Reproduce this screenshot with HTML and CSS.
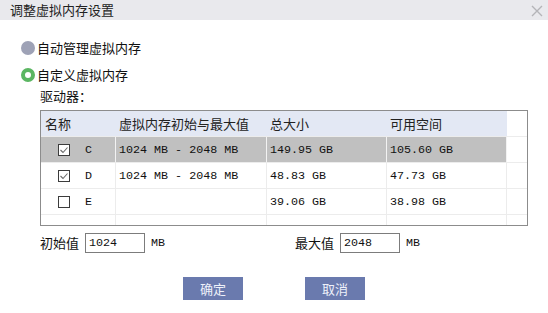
FILE: index.html
```html
<!DOCTYPE html>
<html lang="zh-CN">
<head>
<meta charset="utf-8">
<title>调整虚拟内存设置</title>
<link rel="stylesheet" href="styles.css">
</head>
<body>
<div class="dialog">
  <div class="titlebar">
    <span class="title">调整虚拟内存设置</span>
    <svg class="close" width="12" height="12" viewBox="0 0 12 12"><path d="M1 1L11 11M11 1L1 11" stroke="#b4b4b8" stroke-width="1.4" fill="none"/></svg>
  </div>
  <div class="content">
    <div class="radio-row"><span class="radio radio-off"></span><span class="radio-label">自动管理虚拟内存</span></div>
    <div class="radio-row"><span class="radio radio-on"></span><span class="radio-label">自定义虚拟内存</span></div>
    <div class="drive-label">驱动器：</div>
    <div class="table">
      <div class="trow thead">
        <div class="cell hcell">名称</div>
        <div class="cell hcell">虚拟内存初始与最大值</div>
        <div class="cell hcell">总大小</div>
        <div class="cell hcell">可用空间</div>
        <div class="cell filler"></div>
      </div>
      <div class="trow selected">
        <div class="cell name"><span class="check"><svg width="10" height="10" viewBox="0 0 10 10"><path d="M1.5 5L4 7.5L8.5 2.5" stroke="#6a6a6a" stroke-width="1.1" fill="none"/></svg></span><span class="mono">C</span></div>
        <div class="cell mono">1024 MB - 2048 MB</div>
        <div class="cell mono">149.95 GB</div>
        <div class="cell mono">105.60 GB</div>
        <div class="cell filler"></div>
      </div>
      <div class="trow">
        <div class="cell name"><span class="check"><svg width="10" height="10" viewBox="0 0 10 10"><path d="M1.5 5L4 7.5L8.5 2.5" stroke="#6a6a6a" stroke-width="1.1" fill="none"/></svg></span><span class="mono">D</span></div>
        <div class="cell mono">1024 MB - 2048 MB</div>
        <div class="cell mono">48.83 GB</div>
        <div class="cell mono">47.73 GB</div>
        <div class="cell filler"></div>
      </div>
      <div class="trow">
        <div class="cell name"><span class="check"></span><span class="mono">E</span></div>
        <div class="cell mono"></div>
        <div class="cell mono">39.06 GB</div>
        <div class="cell mono">38.98 GB</div>
        <div class="cell filler"></div>
      </div>
      <div class="trow last">
        <div class="cell"></div>
        <div class="cell"></div>
        <div class="cell"></div>
        <div class="cell"></div>
        <div class="cell filler"></div>
      </div>
    </div>
    <div class="size-row">
      <div class="size-group first">
        <span class="size-label">初始值</span>
        <span class="input mono">1024</span>
        <span class="unit mono">MB</span>
      </div>
      <div class="size-group">
        <span class="size-label">最大值</span>
        <span class="input mono">2048</span>
        <span class="unit mono">MB</span>
      </div>
    </div>
    <div class="buttons">
      <button class="btn">确定</button>
      <button class="btn">取消</button>
    </div>
  </div>
</div>
</body>
</html>
```

FILE: styles.css
```css
* { box-sizing: border-box; }
html, body {
  margin: 0;
  padding: 0;
  background: #ffffff;
}
body {
  width: 548px;
  height: 313px;
  overflow: hidden;
  font-family: "Noto Sans CJK SC", "Noto Sans", sans-serif;
  font-size: 13px;
  color: #111;
}
.dialog {
  width: 548px;
  height: 313px;
  background: #fff;
}
.titlebar {
  height: 20px;
  background: #e9e9ed;
  display: flex;
  align-items: center;
  justify-content: space-between;
  padding: 0 5px 0 10px;
  line-height: 20px;
}
.title {
  color: #222;
  font-size: 13px;
}
.close {
  display: block;
  margin-top: 1px;
}
.content {
  padding-top: 14px;
}
.radio-row {
  height: 27px;
  display: flex;
  align-items: center;
  padding-left: 21px;
  line-height: 16px;
}
.radio {
  width: 14px;
  height: 14px;
  border-radius: 50%;
  flex: none;
}
.radio-off {
  background: #9ea2b6;
}
.radio-on {
  background: #fff;
  border: 4px solid #5bb662;
}
.radio-label {
  margin-left: 2px;
}
.drive-label {
  height: 16px;
  line-height: 16px;
  padding-left: 40px;
}
.table {
  margin: 6px 0 0 40px;
  width: 488px;
  height: 116px;
  border: 1px solid #8c8c8c;
  overflow: hidden;
}
.trow {
  display: grid;
  grid-template-columns: 75px 151px 120px 120px 1fr;
  height: 26px;
  border-bottom: 1px solid #ececec;
}
.trow.last {
  border-bottom: none;
}
.cell {
  border-right: 1px solid #ececec;
  padding-left: 3px;
  display: flex;
  align-items: center;
  white-space: nowrap;
  line-height: 16px;
}
.cell.filler {
  border-right: none;
}
.hcell {
  background: #e3e8f4;
  border-right-color: #e3e8f4;
  color: #222;
}
.thead .cell:first-child {
  padding-left: 4px;
}
.selected .cell {
  background: #c0c0c0;
  border-right-color: #f2f2f2;
}
.selected .cell.filler {
  background: #fff;
}
.mono {
  font-family: "Liberation Mono", "DejaVu Sans Mono", monospace;
  font-size: 11.7px;
  color: #111;
}
.cell.name {
  padding-left: 17px;
}
.check {
  width: 12px;
  height: 12px;
  border: 1px solid #3c3c3c;
  background: #fff;
  display: flex;
  align-items: center;
  justify-content: center;
  margin-right: 15px;
  flex: none;
}
.check svg {
  display: block;
}
.size-row {
  display: flex;
  align-items: center;
  height: 20px;
  margin-top: 7px;
  padding-left: 40px;
}
.size-group {
  display: flex;
  align-items: center;
}
.size-group.first {
  width: 255px;
}
.size-label {
  line-height: 16px;
}
.input {
  width: 60px;
  height: 20px;
  border: 1px solid #7c7c7c;
  margin-left: 6px;
  padding-left: 3px;
  display: flex;
  align-items: center;
}
.unit {
  margin-left: 6px;
}
.buttons {
  display: flex;
  margin-top: 24px;
  padding-left: 183px;
  gap: 62px;
}
.btn {
  width: 60px;
  height: 23px;
  border: none;
  padding: 0;
  background: #6a7aae;
  color: #eef1fa;
  font-family: "Noto Sans CJK SC", "Noto Sans", sans-serif;
  font-size: 13px;
  line-height: 23px;
}
```
